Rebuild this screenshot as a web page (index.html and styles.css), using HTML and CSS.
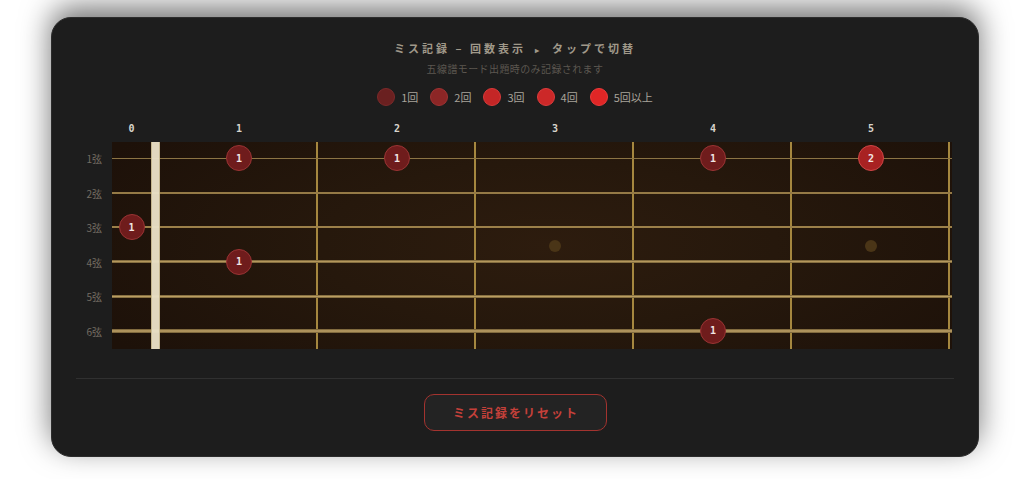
FILE: index.html
```html
<!DOCTYPE html>
<html lang="ja">
<head>
<meta charset="utf-8">
<title>ミス記録</title>
<link rel="stylesheet" href="styles.css">
</head>
<body>
<div class="card">
  <header class="head">
    <div class="title">ミス記録 – 回数表示 <span class="tri">▸</span> タップで切替</div>
    <div class="sub">五線譜モード出題時のみ記録されます</div>
    <div class="legend">
      <span class="lg"><i class="sw c1"></i>1回</span>
      <span class="lg"><i class="sw c2"></i>2回</span>
      <span class="lg"><i class="sw c3"></i>3回</span>
      <span class="lg"><i class="sw c4"></i>4回</span>
      <span class="lg"><i class="sw c5"></i>5回以上</span>
    </div>
  </header>

  <section class="neck">
    <div class="corner"></div>
    <div class="fretnums">
      <span class="fn f0">0</span>
      <span class="fn f1">1</span>
      <span class="fn f2">2</span>
      <span class="fn f3">3</span>
      <span class="fn f4">4</span>
      <span class="fn f5">5</span>
    </div>

    <div class="strlabels">
      <span>1弦</span><span>2弦</span><span>3弦</span><span>4弦</span><span>5弦</span><span>6弦</span>
    </div>

    <div class="board">
      <div class="fret fr1"></div>
      <div class="fret fr2"></div>
      <div class="fret fr3"></div>
      <div class="fret fr4"></div>
      <div class="fret fr5"></div>

      <div class="str s1"></div>
      <div class="str s2"></div>
      <div class="str s3"></div>
      <div class="str s4"></div>
      <div class="str s5"></div>
      <div class="str s6"></div>

      <div class="nut"></div>

      <div class="marker m3"></div>
      <div class="marker m5"></div>

      <div class="dot d-r1 d-f1 lv1">1</div>
      <div class="dot d-r1 d-f2 lv1">1</div>
      <div class="dot d-r1 d-f4 lv1">1</div>
      <div class="dot d-r1 d-f5 lv2">2</div>
      <div class="dot d-r3 d-f0 lv1">1</div>
      <div class="dot d-r4 d-f1 lv1">1</div>
      <div class="dot d-r6 d-f4 lv1">1</div>
    </div>
  </section>

  <div class="divider"></div>

  <button class="reset" type="button">ミス記録をリセット</button>
</div>
</body>
</html>
```

FILE: styles.css
```css
* { box-sizing: border-box; }

html, body {
  margin: 0;
  padding: 0;
  height: 479px;
  overflow: hidden;
  background: #ffffff;
  font-family: "Noto Sans CJK JP", "Noto Sans", sans-serif;
}

.card {
  width: 928px;
  margin: 17px 0 0 51px;
  padding: 23px 24px 25px;
  background: #1d1d1d;
  border: 1px solid #2c2c2c;
  border-radius: 20px;
  box-shadow: 0 -10px 30px rgba(0, 0, 0, 0.55);
  display: flex;
  flex-direction: column;
}

/* header */
.head {
  display: flex;
  flex-direction: column;
  align-items: center;
}

.title {
  font-size: 11px;
  line-height: 14px;
  font-weight: 700;
  letter-spacing: 3px;
  color: #a0998a;
  white-space: pre;
}

.tri {
  font-size: 8px;
  margin: 0 4px;
}

.sub {
  margin-top: 5px;
  font-size: 10px;
  line-height: 14px;
  letter-spacing: 0.4px;
  color: #5c5750;
}

.legend {
  margin-top: 12px;
  display: flex;
  gap: 12px;
  align-items: center;
}

.lg {
  display: flex;
  align-items: center;
  gap: 6px;
  font-size: 11px;
  line-height: 18px;
  color: #a8a39a;
}

.sw {
  display: block;
  width: 18px;
  height: 18px;
  border-radius: 50%;
  border: 1px solid transparent;
}
.c1 { background: #6a2020; border-color: #7c2a2a; }
.c2 { background: #8c2626; border-color: #a03232; }
.c3 { background: #c42626; border-color: #d83a3a; }
.c4 { background: #cc2828; border-color: #dd3c3c; }
.c5 { background: #e02626; border-color: #ee3a3a; }

/* neck */
.neck {
  margin-top: 16px;
  display: grid;
  grid-template-columns: 36px 840px;
  grid-template-rows: 14px 207px;
  row-gap: 6px;
}

.fretnums,
.board {
  display: grid;
  grid-template-columns: 39px 9px repeat(5, 158px) 2px;
}

.fn {
  text-align: center;
  font-family: "DejaVu Sans Mono", monospace;
  font-weight: 700;
  font-size: 10px;
  line-height: 14px;
  color: #d8d4cc;
}
.f0 { grid-column: 1; }
.f1 { grid-column: 3; }
.f2 { grid-column: 4; }
.f3 { grid-column: 5; }
.f4 { grid-column: 6; }
.f5 { grid-column: 7; }

.strlabels {
  display: grid;
  grid-template-rows: repeat(6, 1fr);
  padding-right: 10px;
}
.strlabels span {
  display: flex;
  align-items: center;
  justify-content: flex-end;
  font-size: 10px;
  color: #736c62;
  margin-top: -1px;
}

.board {
  grid-template-rows: repeat(6, 1fr);
  background: radial-gradient(ellipse 60% 90% at 52% 50%, #2d1c0e 0%, #26180c 45%, #1d1109 100%);
}

.fret {
  grid-row: 1 / -1;
  border-right: 2px solid #a5873f;
  z-index: 1;
}
.fr1 { grid-column: 3; }
.fr2 { grid-column: 4; }
.fr3 { grid-column: 5; }
.fr4 { grid-column: 6; }
.fr5 { grid-column: 7; }

.str {
  grid-column: 1 / -1;
  align-self: center;
  margin-top: -2px;
  z-index: 2;
}
.s1 { grid-row: 1; height: 1px; background: #8c7444; }
.s2 { grid-row: 2; height: 2px; background: #957a46; }
.s3 { grid-row: 3; height: 2px; background: #9c8049; }
.s4 { grid-row: 4; height: 3px; background: linear-gradient(#6e5a32, #b4975c 50%, #6e5a32); }
.s5 { grid-row: 5; height: 3px; background: linear-gradient(#6e5a32, #bb9e62 50%, #6e5a32); }
.s6 { grid-row: 6; height: 4px; background: linear-gradient(#6a5630, #c4a66a 50%, #6a5630); }

.nut {
  grid-column: 2;
  grid-row: 1 / -1;
  background: #e9e0c6;
  border-left: 1px solid #cbbd95;
  border-right: 1px solid #cbbd95;
  z-index: 3;
  opacity: 0.96;
}

.marker {
  grid-row: 3 / 5;
  align-self: center;
  justify-self: center;
  width: 12px;
  height: 12px;
  border-radius: 50%;
  background: #4a3517;
  margin-top: 1px;
  z-index: 1;
}
.m3 { grid-column: 5; }
.m5 { grid-column: 7; }

.dot {
  align-self: center;
  justify-self: center;
  width: 26px;
  height: 26px;
  margin-top: -2px;
  border-radius: 50%;
  display: flex;
  align-items: center;
  justify-content: center;
  font-family: "DejaVu Sans Mono", monospace;
  font-weight: 700;
  font-size: 10px;
  color: #f1e6e4;
  z-index: 4;
}
.lv1 { background: #6f1c1c; border: 1.5px solid #9a3434; }
.lv2 { background: #a82222; border: 1.5px solid #cf4646; }

.d-r1 { grid-row: 1; }
.d-r3 { grid-row: 3; }
.d-r4 { grid-row: 4; }
.d-r6 { grid-row: 6; }
.d-f0 { grid-column: 1; }
.d-f1 { grid-column: 3; }
.d-f2 { grid-column: 4; }
.d-f4 { grid-column: 6; }
.d-f5 { grid-column: 7; }

/* footer */
.divider {
  margin-top: 29px;
  height: 1px;
  background: #303030;
}

.reset {
  margin-top: 15px;
  align-self: center;
  width: 183px;
  height: 37px;
  border: 1.5px solid #a3332f;
  border-radius: 10px;
  background: #232323;
  color: #c4403a;
  font-family: "Noto Sans CJK JP", "Noto Sans", sans-serif;
  font-size: 12px;
  font-weight: 700;
  letter-spacing: 2px;
  padding: 0 0 0 2px;
}
```
